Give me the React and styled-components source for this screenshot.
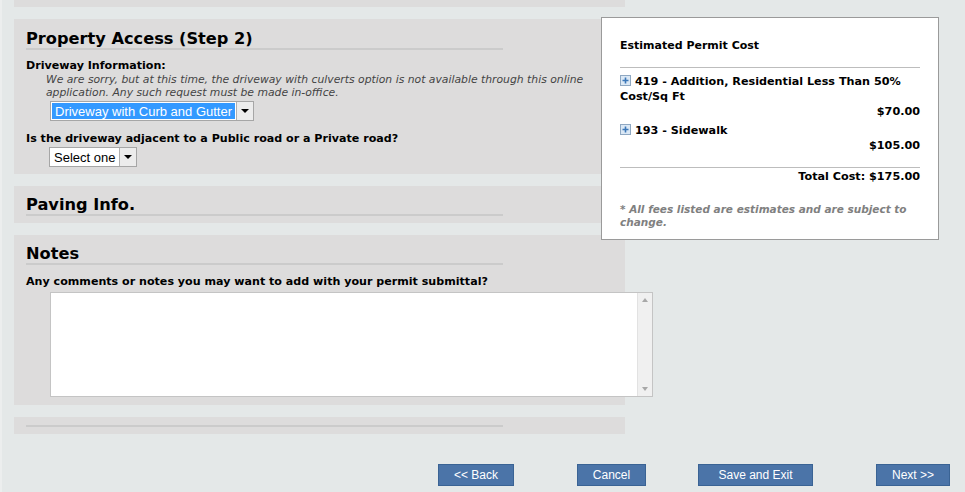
import styled, { createGlobalStyle } from "styled-components";

const GlobalStyle = createGlobalStyle`
  html, body { margin: 0; padding: 0; }
  body {
    background: #e4e8e8;
    font-family: "DejaVu Sans", Verdana, sans-serif;
    color: #000;
    width: 965px;
    height: 492px;
    overflow: hidden;
  }
`;

const Page = styled.div`
  height: 492px;
  border-left: 2px solid #eceeee;
  box-sizing: border-box;
  padding-left: 12px;
  display: flex;
  flex-direction: column;
`;

const Main = styled.div`
  display: flex;
  align-items: flex-start;
`;

const Column = styled.div`
  width: 611px;
  display: flex;
  flex-direction: column;
  gap: 12px;
`;

const Panel = styled.section`
  background: #dddcdc;
  padding: ${(p) => p.$pad || "10px 12px 8px"};
  height: ${(p) => (p.$h ? p.$h + "px" : "auto")};
  box-sizing: border-box;
`;

const Heading = styled.h2`
  margin: 0;
  width: 477px;
  font-size: 16.2px;
  line-height: 18px;
  font-weight: bold;
  border-bottom: 2px solid #cbcbcb;
`;

const Label = styled.div`
  font-size: 11.1px;
  font-weight: bold;
  line-height: 14px;
  margin-top: ${(p) => p.$top || 0}px;
`;

const Notice = styled.div`
  font-size: 10.8px;
  font-style: italic;
  color: #444;
  line-height: 13px;
  padding-left: 20px;
`;

const SelectBox = styled.div`
  display: inline-flex;
  align-items: stretch;
  margin-left: ${(p) => p.$left}px;
  margin-top: ${(p) => p.$top || 0}px;
  height: 20px;
  border: 1px solid #a6a6a6;
  background: #fff;
  font-family: "Liberation Sans", Arial, sans-serif;
  font-size: 13px;
  box-sizing: border-box;
`;

const SelectValue = styled.span`
  display: flex;
  align-items: center;
  padding: 0 3px;
  margin: 1px;
  background: ${(p) => (p.$active ? "#3399ff" : "#fff")};
  color: ${(p) => (p.$active ? "#fff" : "#000")};
`;

const SelectArrow = styled.span`
  width: 16px;
  display: flex;
  align-items: center;
  justify-content: center;
  background: #ececec;
  border-left: 1px solid #b0b0b0;
  &::after {
    content: "";
    border-left: 4px solid transparent;
    border-right: 4px solid transparent;
    border-top: 4px solid #000;
  }
`;

const NoteArea = styled.div`
  margin: 3px 0 0 24px;
  width: 603px;
  height: 105px;
  display: flex;
  background: #fff;
  border: 1px solid #c4c4c4;
  box-sizing: border-box;
`;

const TextBox = styled.textarea`
  flex: 1;
  border: none;
  resize: none;
  outline: none;
  background: #fff;
`;

const ScrollTrack = styled.div`
  width: 15px;
  background: #f0f0f0;
  border-left: 1px solid #e2e2e2;
  display: flex;
  flex-direction: column;
  justify-content: space-between;
  align-items: center;
  padding: 5px 0;
  box-sizing: border-box;
`;

const ScrollArrow = styled.span`
  border-left: 3px solid transparent;
  border-right: 3px solid transparent;
  ${(p) => (p.$up ? "border-bottom" : "border-top")}: 4px solid #a8a8a8;
`;

const Card = styled.aside`
  margin: 17px 0 0 -24px;
  width: 338px;
  height: 223px;
  background: #fff;
  border: 1px solid #9a9a9a;
  box-sizing: border-box;
  padding: 21px 18px 0 18px;
  z-index: 1;
`;

const CardTitle = styled.div`
  font-size: 11px;
  font-weight: bold;
  line-height: 14px;
  padding-bottom: 14px;
  border-bottom: 1px solid #bdbdbd;
`;

const FeeItem = styled.div`
  margin-top: ${(p) => p.$top}px;
  font-size: 11.2px;
  font-weight: bold;
  line-height: 15px;
`;

const Amount = styled.div`
  text-align: right;
  font-size: 11.2px;
  font-weight: bold;
  line-height: 15px;
`;

const Total = styled.div`
  margin-top: 14px;
  border-top: 1px solid #bdbdbd;
  padding-top: 1px;
  text-align: right;
  font-size: 11.2px;
  font-weight: bold;
  line-height: 15px;
`;

const Disclaimer = styled.div`
  margin-top: 19px;
  font-size: 10.5px;
  font-style: italic;
  font-weight: bold;
  color: #808080;
  line-height: 13px;
`;

const Footer = styled.div`
  margin-top: auto;
  padding: 0 0 6px 424px;
  display: flex;
`;

const Button = styled.button`
  margin-left: ${(p) => p.$gap}px;
  width: ${(p) => p.$w}px;
  height: 22px;
  background: #4b74a8;
  border: 1px solid #3a6394;
  color: #fff;
  font-family: "Liberation Sans", Arial, sans-serif;
  font-size: 12px;
  padding: 0;
`;

const PlusIcon = () => (
  <svg width="11" height="11" viewBox="0 0 11 11" style={{ verticalAlign: "-1px", marginRight: 4 }}>
    <rect x="0.5" y="0.5" width="10" height="10" fill="#dbe8f5" stroke="#8fa8c2" />
    <path d="M5.5 2.5v6M2.5 5.5h6" stroke="#3b77b8" strokeWidth="1.6" />
  </svg>
);

export default function App() {
  return (
    <>
      <GlobalStyle />
      <Page>
        <Main>
          <Column>
            <Panel $h={7} $pad="0" />
            <Panel $h={155} $pad="11px 12px 0">
              <Heading>Property Access (Step 2)</Heading>
              <Label $top={9}>Driveway Information:</Label>
              <Notice>
                We are sorry, but at this time, the driveway with culverts option is not available through this online
                application. Any such request must be made in-office.
              </Notice>
              <SelectBox $left={24} $top={2}>
                <SelectValue $active>Driveway with Curb and Gutter</SelectValue>
                <SelectArrow />
              </SelectBox>
              <Label $top={11}>Is the driveway adjacent to a Public road or a Private road?</Label>
              <SelectBox $left={23} $top={1}>
                <SelectValue>Select one</SelectValue>
                <SelectArrow />
              </SelectBox>
            </Panel>
            <Panel $h={37} $pad="10px 12px 0">
              <Heading>Paving Info.</Heading>
            </Panel>
            <Panel $h={170} $pad="10px 12px 0">
              <Heading>Notes</Heading>
              <Label $top={10}>Any comments or notes you may want to add with your permit submittal?</Label>
              <NoteArea>
                <TextBox />
                <ScrollTrack>
                  <ScrollArrow $up />
                  <ScrollArrow />
                </ScrollTrack>
              </NoteArea>
            </Panel>
            <Panel $h={17} $pad="8px 12px 0">
              <Heading />
            </Panel>
          </Column>
          <Card>
            <CardTitle>Estimated Permit Cost</CardTitle>
            <FeeItem $top={6}>
              <PlusIcon />
              419 - Addition, Residential Less Than 50% Cost/Sq Ft
            </FeeItem>
            <Amount>$70.00</Amount>
            <FeeItem $top={4}>
              <PlusIcon />
              193 - Sidewalk
            </FeeItem>
            <Amount>$105.00</Amount>
            <Total>Total Cost: $175.00</Total>
            <Disclaimer>* All fees listed are estimates and are subject to change.</Disclaimer>
          </Card>
        </Main>
        <Footer>
          <Button $gap={0} $w={76}>&lt;&lt; Back</Button>
          <Button $gap={63} $w={69}>Cancel</Button>
          <Button $gap={52} $w={115}>Save and Exit</Button>
          <Button $gap={63} $w={74}>Next &gt;&gt;</Button>
        </Footer>
      </Page>
    </>
  );
}
